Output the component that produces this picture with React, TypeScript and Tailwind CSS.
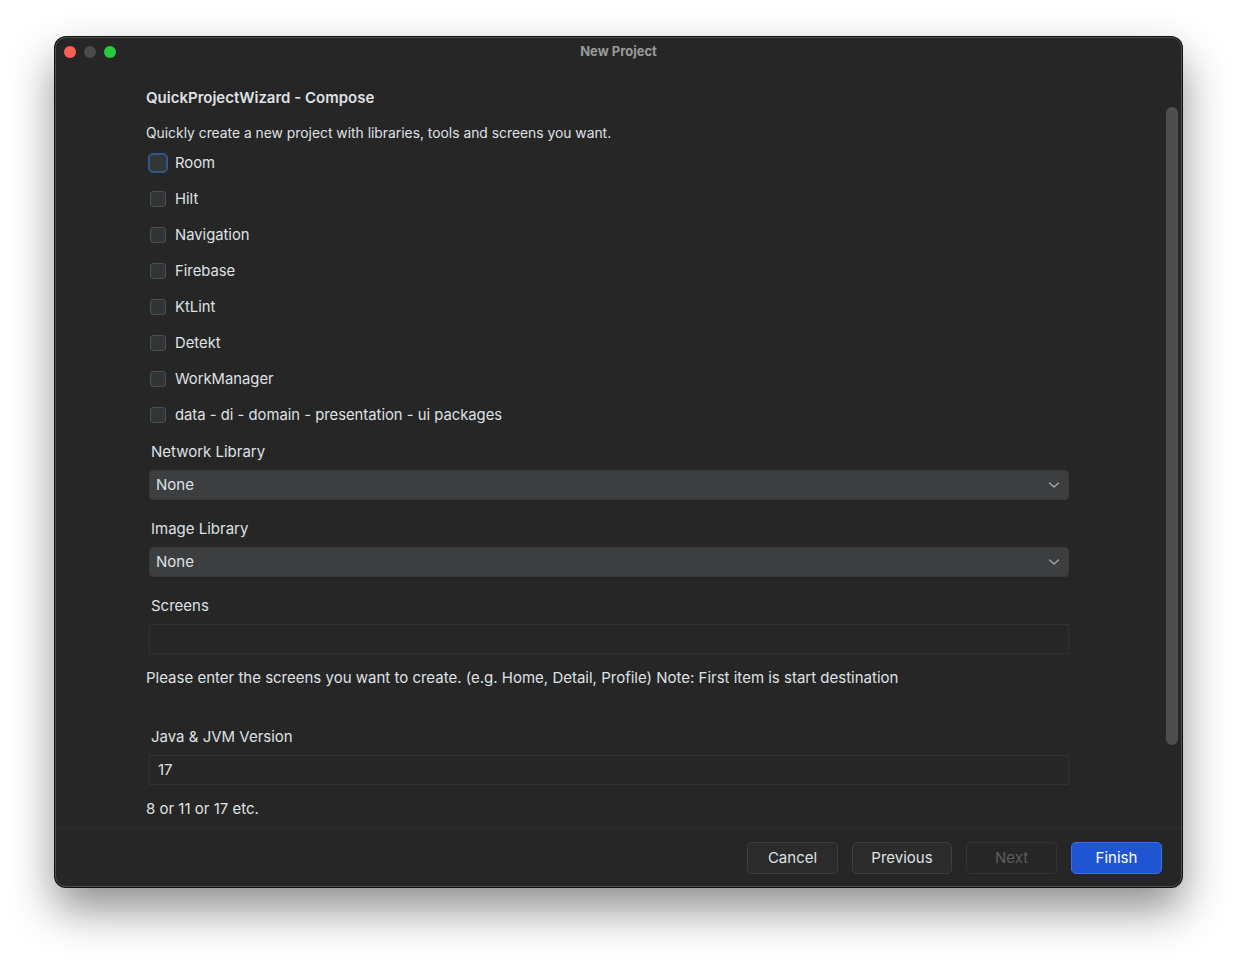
import React from "react";

const items = [
  "Room",
  "Hilt",
  "Navigation",
  "Firebase",
  "KtLint",
  "Detekt",
  "WorkManager",
  "data - di - domain - presentation - ui packages",
];

function Chevron() {
  return (
    <svg width="12" height="8" viewBox="0 0 12 8" fill="none">
      <path d="M1.5 2 L6 6 L10.5 2" stroke="#a8abb0" strokeWidth="1.3" strokeLinecap="round" strokeLinejoin="round" />
    </svg>
  );
}

function Select() {
  return (
    <div className="ml-[3px] mt-[8px] h-[30px] w-[920px] rounded-[4px] bg-[#3c3e40] border border-[#36383a] flex items-center justify-between pl-[6px] pr-[8px]">
      <span className="text-[15px] text-[#dfe1e5]">None</span>
      <Chevron />
    </div>
  );
}

function Label({ text, mt }: { text: string; mt: string }) {
  return (
    <div className={`pl-[5px] h-[20px] leading-[20px] text-[15px] text-[#dfe1e5] ${mt}`}>{text}</div>
  );
}

export default function App() {
  return (
    <div
      className="w-[1237px] h-[961px] bg-white pt-[37px] pl-[55px]"
      style={{ fontFamily: "Inter, 'Noto Sans', sans-serif" }}
    >
      <div className="relative w-[1127px] h-[850px] rounded-[11px] bg-[#262626] border border-[#505050] shadow-[0_0_0_1px_#111,0_22px_45px_rgba(0,0,0,0.45)] flex flex-col overflow-hidden">
        {/* title bar */}
        <div className="relative h-[27px] flex items-center">
          <div className="flex items-center gap-[8px] pl-[8px] pt-[1px]">
            <span className="w-[12px] h-[12px] rounded-full bg-[#ff5f57]" />
            <span className="w-[12px] h-[12px] rounded-full bg-[#4b4b4b]" />
            <span className="w-[12px] h-[12px] rounded-full bg-[#28c840]" />
          </div>
          <div className="absolute inset-0 flex items-center justify-center pt-[1px] text-[13px] font-bold text-[#9a9a9a]">
            New Project
          </div>
        </div>

        {/* body */}
        <div className="relative flex-1 pl-[90px]">
          <div className="mt-[23px] h-[20px] leading-[20px] text-[15px] font-semibold text-[#dfe1e5]">
            QuickProjectWizard - Compose
          </div>
          <div className="mt-[15px] h-[20px] leading-[20px] text-[13.85px] text-[#dfe1e5]">
            Quickly create a new project with libraries, tools and screens you want.
          </div>
          <div className="mt-[2px] flex flex-col">
            {items.map((it, i) => (
              <div key={it} className="h-[36px] flex items-center pl-[4px]">
                {i === 0 ? (
                  <span className="w-[20px] h-[20px] -ml-[2px] mr-[7px] rounded-[5px] border-2 border-[#2f5688] bg-[#333636]" />
                ) : (
                  <span className="w-[16px] h-[16px] mr-[9px] rounded-[3px] border border-[#4c5052] bg-[#323535]" />
                )}
                <span className="text-[14.8px] text-[#dfe1e5]">{it}</span>
              </div>
            ))}
          </div>

          <Label text="Network Library" mt="mt-[9px]" />
          <Select />
          <Label text="Image Library" mt="mt-[19px]" />
          <Select />
          <Label text="Screens" mt="mt-[19px]" />
          <div className="ml-[3px] mt-[8px] h-[30px] w-[920px] border border-[#313131] bg-[#262626]" />
          <div className="mt-[14px] h-[20px] leading-[20px] text-[15px] text-[#dfe1e5]">
            Please enter the screens you want to create. (e.g. Home, Detail, Profile) Note: First item is start destination
          </div>
          <Label text="Java & JVM Version" mt="mt-[39px]" />
          <div className="ml-[3px] mt-[8px] h-[30px] w-[920px] border border-[#313131] bg-[#262626] flex items-center pl-[8px]">
            <span className="text-[15px] text-[#dfe1e5]">17</span>
          </div>
          <div className="mt-[14px] h-[20px] leading-[20px] text-[15px] text-[#dfe1e5]">8 or 11 or 17 etc.</div>

          {/* scrollbar */}
          <div className="absolute right-[3px] top-[42px] w-[12px] h-[638px] rounded-full bg-[#4e4e4e]" />
        </div>

        {/* footer */}
        <div className="h-[59px] border-t border-[#2e2e2e] flex items-start justify-end gap-[14px] pt-[14px] pr-[19px]">
          <button className="w-[91px] h-[32px] pt-[1px] rounded-[5px] bg-[#2b2b2b] border border-[#3e3f41] text-[15px] text-[#dfe1e5]">
            Cancel
          </button>
          <button className="w-[100px] h-[32px] pt-[1px] rounded-[5px] bg-[#2b2b2b] border border-[#3e3f41] text-[15px] text-[#dfe1e5]">
            Previous
          </button>
          <button className="w-[91px] h-[32px] pt-[1px] rounded-[5px] bg-[#262626] border border-[#333435] text-[15px] text-[#5c5d5f]">
            Next
          </button>
          <button className="w-[91px] h-[32px] pt-[1px] rounded-[5px] bg-[#1f54d2] border border-[#3a6fe8] text-[15px] text-white">
            Finish
          </button>
        </div>
      </div>
    </div>
  );
}
